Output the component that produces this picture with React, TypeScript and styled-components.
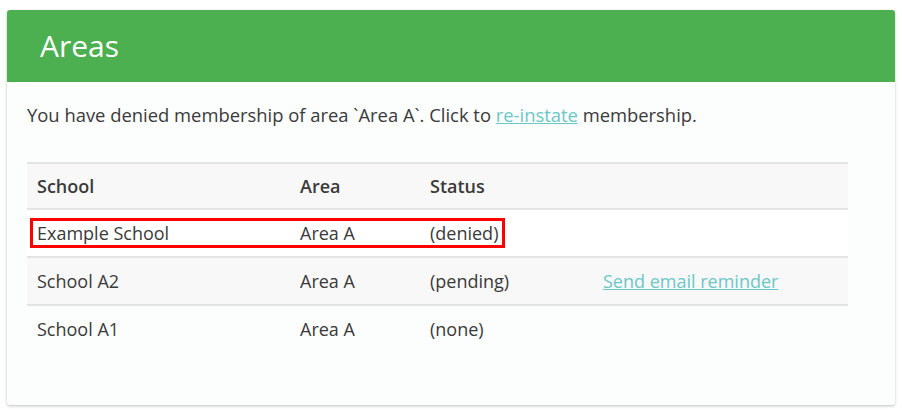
import styled, { createGlobalStyle } from "styled-components";

const GlobalStyle = createGlobalStyle`
	body {
		margin: 0;
		background: #ffffff;
		font-family: "Open Sans", "Noto Sans", sans-serif;
		color: #3a3a3a;
	}
`;

type Row = {
	school: string;
	area: string;
	status: string;
	action?: string;
	highlight?: boolean;
};

const rows: Row[] = [
	{ school: "Example School", area: "Area A", status: "(denied)", highlight: true },
	{ school: "School A2", area: "Area A", status: "(pending)", action: "Send email reminder" },
	{ school: "School A1", area: "Area A", status: "(none)" },
];

function App() {
	return (
		<>
			<GlobalStyle />
			<Page>
				<Card>
					<Header>
						<Title>Areas</Title>
					</Header>
					<Body>
						<Message>
							You have denied membership of area `Area A`. Click to <Link href="#">re-instate</Link> membership.
						</Message>
						<Table>
							<thead>
								<tr>
									<Th $width={263}>School</Th>
									<Th $width={130}>Area</Th>
									<Th $width={173}>Status</Th>
									<Th />
								</tr>
							</thead>
							<tbody>
								{rows.map((row, i) => (
									<Tr key={row.school} $striped={i % 2 === 1}>
										<Td>
											{row.highlight && <Highlight />}
											{row.school}
										</Td>
										<Td>{row.area}</Td>
										<Td>{row.status}</Td>
										<Td>{row.action && <Link href="#">{row.action}</Link>}</Td>
									</Tr>
								))}
							</tbody>
						</Table>
					</Body>
				</Card>
			</Page>
		</>
	);
}

const Page = styled.div`
	padding: 10px 7px 7px 7px;
`;

const Card = styled.div`
	background: #fcfdfd;
	border-radius: 3px;
	box-shadow: 0 1px 3px rgba(0, 0, 0, 0.25);
	height: 395px;
	overflow: hidden;
`;

const Header = styled.div`
	background: #4caf50;
	height: 72px;
	display: flex;
	align-items: center;
	padding: 0 33px;
`;

const Title = styled.h1`
	margin: 0;
	font-size: 30px;
	font-weight: 400;
	color: #ffffff;
	padding-bottom: 2px;
`;

const Body = styled.div`
	padding: 20px 47px 0 20px;
`;

const Message = styled.p`
	margin: 0 0 34px;
	font-size: 18.4px;
	line-height: 26px;
`;

const Link = styled.a`
	color: #6cc7c7;
	text-decoration: underline;
`;

const Table = styled.table`
	width: 100%;
	border-collapse: collapse;
	font-size: 18px;
	position: relative;
`;

const Th = styled.th<{ $width?: number }>`
	text-align: left;
	font-weight: 600;
	background: #f8f8f8;
	border-top: 2px solid #e4e4e4;
	border-bottom: 2px solid #e4e4e4;
	height: 46px;
	padding: 0 10px;
	width: ${(p) => (p.$width ? `${p.$width}px` : "auto")};
	box-sizing: border-box;
`;

const Tr = styled.tr<{ $striped: boolean }>`
	background: ${(p) => (p.$striped ? "#f8f8f8" : "#ffffff")};
	&:last-child {
		background: transparent;
	}
`;

const Td = styled.td`
	height: 46px;
	padding: 0 10px;
	border-bottom: 2px solid #e4e4e4;
	position: relative;
	${Tr}:last-child & {
		border-bottom: none;
	}
`;

const Highlight = styled.span`
	position: absolute;
	left: 3px;
	top: 8px;
	width: 475px;
	height: 30px;
	border: 3px solid #ff0000;
	box-sizing: border-box;
	pointer-events: none;
`;

export default App;
